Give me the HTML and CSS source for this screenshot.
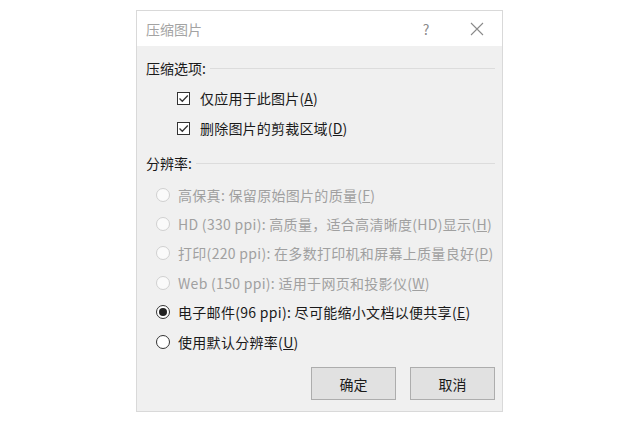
FILE: index.html
```html
<!DOCTYPE html>
<html lang="zh-CN">
<head>
<meta charset="utf-8">
<title>压缩图片</title>
<link rel="stylesheet" href="styles.css">
</head>
<body>
<div class="dialog">
  <div class="titlebar">
    <span class="title">压缩图片</span>
    <span class="help">?</span>
    <span class="close">
      <svg width="14" height="14" viewBox="0 0 14 14"><path d="M1 1L13 13M13 1L1 13" stroke="#8a8a8a" stroke-width="1.1" fill="none"/></svg>
    </span>
  </div>
  <div class="content">
    <div class="group-label"><span>压缩选项:</span><span class="rule"></span></div>
    <div class="check-row">
      <span class="checkbox"><svg width="11" height="11" viewBox="0 0 11 11"><path d="M1.5 5.5L4.3 8.3L9.8 2.5" stroke="#333" stroke-width="1.3" fill="none"/></svg></span>
      <span>仅应用于此图片(<u>A</u>)</span>
    </div>
    <div class="check-row">
      <span class="checkbox"><svg width="11" height="11" viewBox="0 0 11 11"><path d="M1.5 5.5L4.3 8.3L9.8 2.5" stroke="#333" stroke-width="1.3" fill="none"/></svg></span>
      <span>删除图片的剪裁区域(<u>D</u>)</span>
    </div>
    <div class="group-label second"><span>分辨率:</span><span class="rule"></span></div>
    <div class="radio-row disabled"><span class="radio"></span><span>高保真: 保留原始图片的质量(<u>F</u>)</span></div>
    <div class="radio-row disabled"><span class="radio"></span><span>HD (330 ppi): 高质量，适合高清晰度(HD)显示(<u>H</u>)</span></div>
    <div class="radio-row disabled"><span class="radio"></span><span>打印(220 ppi): 在多数打印机和屏幕上质量良好(<u>P</u>)</span></div>
    <div class="radio-row disabled"><span class="radio"></span><span>Web (150 ppi): 适用于网页和投影仪(<u>W</u>)</span></div>
    <div class="radio-row"><span class="radio checked"></span><span>电子邮件(96 ppi): 尽可能缩小文档以便共享(<u>E</u>)</span></div>
    <div class="radio-row"><span class="radio"></span><span>使用默认分辨率(<u>U</u>)</span></div>
    <div class="buttons">
      <button class="btn">确定</button>
      <button class="btn">取消</button>
    </div>
  </div>
</div>
</body>
</html>
```
FILE: styles.css
```css
html, body {
  margin: 0;
  padding: 0;
  background: #ffffff;
}
body {
  font-family: "Noto Sans CJK SC", "Noto Sans", sans-serif;
  font-size: 14px;
  color: #1a1a1a;
}
.dialog {
  margin: 10px 0 0 136px;
  width: 367px;
  height: 402px;
  box-sizing: border-box;
  border: 1px solid #d9d9d9;
  background: #f0f0f0;
  display: flex;
  flex-direction: column;
}
.titlebar {
  height: 35px;
  background: #ffffff;
  display: flex;
  align-items: center;
  padding-left: 9px;
  flex: none;
}
.title {
  color: #a3a3a3;
  font-size: 14px;
  flex: 1;
}
.help {
  color: #8a8a8a;
  font-size: 14px;
  width: 20px;
  text-align: center;
  margin-right: 34px;
}
.close {
  width: 14px;
  height: 14px;
  margin-right: 18px;
  display: flex;
}
.content {
  padding: 12px 7px 0 9px;
  display: flex;
  flex-direction: column;
}
.group-label {
  height: 20px;
  line-height: 20px;
  display: flex;
  align-items: center;
}
.group-label.second {
  margin-top: 10px;
}
.rule {
  flex: 1;
  height: 1px;
  background: #dcdcdc;
  margin-left: 4px;
}
.check-row {
  height: 30px;
  display: flex;
  align-items: center;
  padding-left: 31px;
  letter-spacing: 0.2px;
}
.group-label + .check-row {
  margin-top: 5px;
}
.checkbox {
  width: 13px;
  height: 13px;
  box-sizing: border-box;
  border: 1px solid #333;
  background: #fff;
  display: flex;
  align-items: center;
  justify-content: center;
  margin-right: 10px;
}
.group-label + .radio-row {
  margin-top: 7px;
}
.radio-row {
  height: 29.4px;
  display: flex;
  align-items: center;
  padding-left: 10px;
  letter-spacing: 0.3px;
}
.radio {
  width: 14px;
  height: 14px;
  box-sizing: border-box;
  border: 1px solid #333;
  border-radius: 50%;
  background: #fff;
  margin-right: 8px;
  display: flex;
  align-items: center;
  justify-content: center;
}
.radio.checked::after {
  content: "";
  width: 8px;
  height: 8px;
  border-radius: 50%;
  background: #222;
}
.disabled {
  color: #a0a0a0;
}
.disabled .radio {
  border-color: #d0d0d0;
  background: #fafafa;
}
.buttons {
  display: flex;
  justify-content: flex-end;
  gap: 14px;
  margin-top: 11px;
}
.btn {
  width: 85px;
  height: 33px;
  box-sizing: border-box;
  border: 1px solid #adadad;
  background: #e1e1e1;
  font-family: "Noto Sans CJK SC", sans-serif;
  font-size: 14px;
  color: #1a1a1a;
  padding: 0;
}
```
